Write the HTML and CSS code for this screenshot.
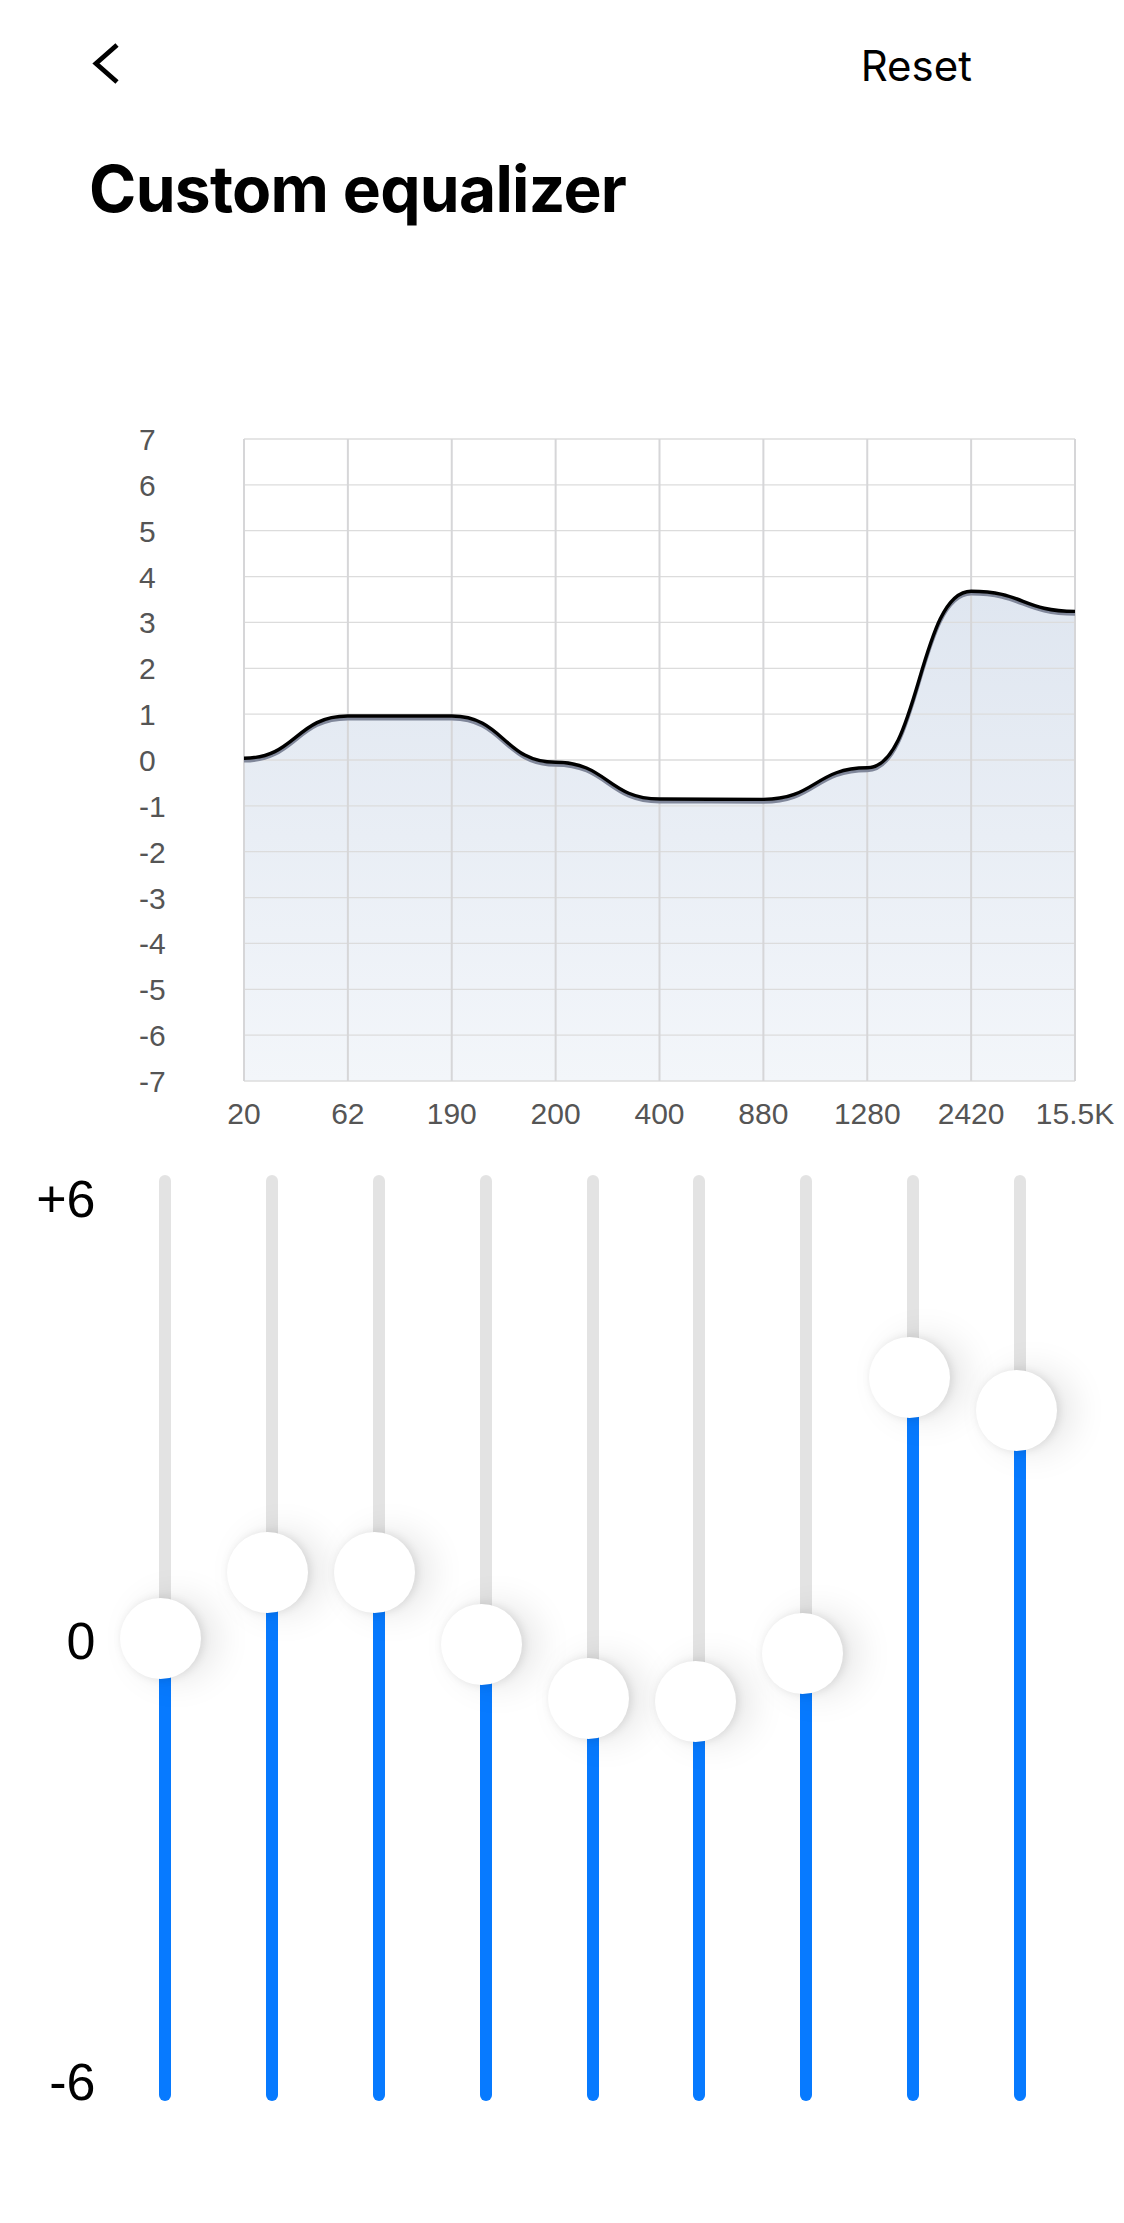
FILE: index.html
```html
<!DOCTYPE html>
<html lang="en">
<head>
    <meta charset="UTF-8">
    <meta name="viewport" content="width=device-width, initial-scale=1.0">
    <title>Custom equalizer</title>
    <link rel="stylesheet" href="styles.css">
</head>
<body>

<header class="topbar">
    <svg class="back" viewBox="0 0 28 44" aria-label="Back">
        <polyline points="25,4 4,22.5 25,41" fill="none" stroke="#000" stroke-width="4.8" stroke-linejoin="miter"/>
    </svg>
    <button class="reset" type="button">Reset</button>
</header>

<h1 class="title">Custom equalizer</h1>

<svg class="chart" viewBox="0 0 1124 720">
    <defs>
        <linearGradient id="fillGrad" x1="0" y1="171" x2="0" y2="661" gradientUnits="userSpaceOnUse">
            <stop offset="0" stop-color="#dfe6f0"/>
            <stop offset="1" stop-color="#f3f6fa"/>
        </linearGradient>
        <path id="curve" d="M244,338.2 C295.9,338.2 295.9,296 347.9,296 C399.8,296 399.8,296 451.75,296 C503.7,296 503.7,342.3 555.6,342.3 C607.6,342.3 607.6,379 659.5,379 C711.4,379 711.4,379.4 763.4,379.4 C815.3,379.4 815.3,347.8 867.25,347.8 C919.2,347.8 919.2,171.2 971.1,171.2 C1023,171.2 1023,191.4 1075,191.4"/>
    </defs>

    <!-- Fläche unter der Kurve -->
    <path d="M244,338.2 C295.9,338.2 295.9,296 347.9,296 C399.8,296 399.8,296 451.75,296 C503.7,296 503.7,342.3 555.6,342.3 C607.6,342.3 607.6,379 659.5,379 C711.4,379 711.4,379.4 763.4,379.4 C815.3,379.4 815.3,347.8 867.25,347.8 C919.2,347.8 919.2,171.2 971.1,171.2 C1023,171.2 1023,191.4 1075,191.4 L1075,661 L244,661 Z" fill="url(#fillGrad)"/>

    <g class="grid-h">
        <line x1="244" x2="1075" y1="19" y2="19"/>
        <line x1="244" x2="1075" y1="64.86" y2="64.86"/>
        <line x1="244" x2="1075" y1="110.71" y2="110.71"/>
        <line x1="244" x2="1075" y1="156.57" y2="156.57"/>
        <line x1="244" x2="1075" y1="202.43" y2="202.43"/>
        <line x1="244" x2="1075" y1="248.29" y2="248.29"/>
        <line x1="244" x2="1075" y1="294.14" y2="294.14"/>
        <line x1="244" x2="1075" y1="340" y2="340"/>
        <line x1="244" x2="1075" y1="385.86" y2="385.86"/>
        <line x1="244" x2="1075" y1="431.71" y2="431.71"/>
        <line x1="244" x2="1075" y1="477.57" y2="477.57"/>
        <line x1="244" x2="1075" y1="523.43" y2="523.43"/>
        <line x1="244" x2="1075" y1="569.29" y2="569.29"/>
        <line x1="244" x2="1075" y1="615.14" y2="615.14"/>
        <line x1="244" x2="1075" y1="661" y2="661"/>
    </g>
    <g class="grid-v">
        <line y1="19" y2="661" x1="244" x2="244"/>
        <line y1="19" y2="661" x1="347.88" x2="347.88"/>
        <line y1="19" y2="661" x1="451.75" x2="451.75"/>
        <line y1="19" y2="661" x1="555.63" x2="555.63"/>
        <line y1="19" y2="661" x1="659.5" x2="659.5"/>
        <line y1="19" y2="661" x1="763.38" x2="763.38"/>
        <line y1="19" y2="661" x1="867.25" x2="867.25"/>
        <line y1="19" y2="661" x1="971.13" x2="971.13"/>
        <line y1="19" y2="661" x1="1075" x2="1075"/>
    </g>

    <use href="#curve" class="curve-shadow" transform="translate(0,2.8)"/>
    <use href="#curve" class="curve-line"/>

    <g class="axis-y">
        <text x="139" y="30">7</text>
        <text x="139" y="75.86">6</text>
        <text x="139" y="121.71">5</text>
        <text x="139" y="167.57">4</text>
        <text x="139" y="213.43">3</text>
        <text x="139" y="259.29">2</text>
        <text x="139" y="305.14">1</text>
        <text x="139" y="351">0</text>
        <text x="139" y="396.86">-1</text>
        <text x="139" y="442.71">-2</text>
        <text x="139" y="488.57">-3</text>
        <text x="139" y="534.43">-4</text>
        <text x="139" y="580.29">-5</text>
        <text x="139" y="626.14">-6</text>
        <text x="139" y="672">-7</text>
    </g>
    <g class="axis-x">
        <text x="244" y="704">20</text>
        <text x="347.88" y="704">62</text>
        <text x="451.75" y="704">190</text>
        <text x="555.63" y="704">200</text>
        <text x="659.5" y="704">400</text>
        <text x="763.38" y="704">880</text>
        <text x="867.25" y="704">1280</text>
        <text x="971.13" y="704">2420</text>
        <text x="1075" y="704">15.5K</text>
    </g>
</svg>

<section class="sliders">
    <div class="scale">
        <span>+6</span>
        <span>0</span>
        <span>-6</span>
    </div>
    <div class="band"><div class="track" style="--v: 0"><div class="knob"></div></div></div>
    <div class="band"><div class="track" style="--v: 0.93"><div class="knob"></div></div></div>
    <div class="band"><div class="track" style="--v: 0.93"><div class="knob"></div></div></div>
    <div class="band"><div class="track" style="--v: -0.09"><div class="knob"></div></div></div>
    <div class="band"><div class="track" style="--v: -0.86"><div class="knob"></div></div></div>
    <div class="band"><div class="track" style="--v: -0.9"><div class="knob"></div></div></div>
    <div class="band"><div class="track" style="--v: -0.22"><div class="knob"></div></div></div>
    <div class="band"><div class="track" style="--v: 3.7"><div class="knob"></div></div></div>
    <div class="band"><div class="track" style="--v: 3.23"><div class="knob"></div></div></div>
</section>

</body>
</html>
```

FILE: styles.css
```css
body {
    margin: 0;
    background-color: #fff;
    color: #000;
    font-family: Inter, "Noto Sans", sans-serif;
}

.topbar {
    display: flex;
    justify-content: space-between;
    align-items: center;
    height: 126px;
    padding: 0 152px 0 92px;
}

.back {
    display: block;
    width: 28px;
    height: 44px;
}

.reset {
    margin: 0;
    padding: 5px 0 0;
    border: none;
    background: none;
    color: #000;
    font-family: Inter, "Noto Sans", sans-serif;
    font-size: 42px;
    line-height: 1;
    cursor: pointer;
}

.title {
    margin: 31px 0 0;
    padding-left: 89px;
    font-size: 64px;
    font-weight: 700;
    line-height: 1;
    letter-spacing: -0.7px;
}

.chart {
    display: block;
    width: 1124px;
    height: 720px;
    margin-top: 199px;
}

.grid-h line {
    stroke: #dcdcdc;
    stroke-width: 1.3;
}

.grid-v line {
    stroke: #d6d6d8;
    stroke-width: 2;
}

.curve-shadow {
    fill: none;
    stroke: #80879a;
    stroke-width: 3.2;
}

.curve-line {
    fill: none;
    stroke: #000;
    stroke-width: 3.4;
}

.axis-y text,
.axis-x text {
    font-family: "Liberation Sans", Arial, sans-serif;
    font-size: 30px;
    fill: #555;
}

.axis-x text {
    text-anchor: middle;
}

.sliders {
    display: flex;
    align-items: flex-start;
    margin-top: 33px;
}

.scale {
    box-sizing: border-box;
    width: 111.5px;
    height: 935px;
    padding-right: 16px;
    display: flex;
    flex-direction: column;
    justify-content: space-between;
    align-items: flex-end;
    font-family: "Liberation Sans", Arial, sans-serif;
    font-size: 52px;
    line-height: 1;
}

.band {
    width: 106.9px;
    display: flex;
    justify-content: center;
    padding-top: 2px;
}

.track {
    --v: 0;
    position: relative;
    width: 12px;
    height: 926px;
    border-radius: 6px;
    background: linear-gradient(to top, #077aff calc(463px + var(--v) * 70.4px), #e3e3e3 0);
}

.knob {
    position: absolute;
    left: calc(50% - 44.5px);
    top: calc(422.5px - var(--v) * 70.4px);
    width: 81px;
    height: 81px;
    border-radius: 50%;
    background-color: #fff;
    box-shadow: 2px 0 10px rgba(0, 0, 0, 0.1), 16px 0 36px rgba(0, 0, 0, 0.1);
}
```
